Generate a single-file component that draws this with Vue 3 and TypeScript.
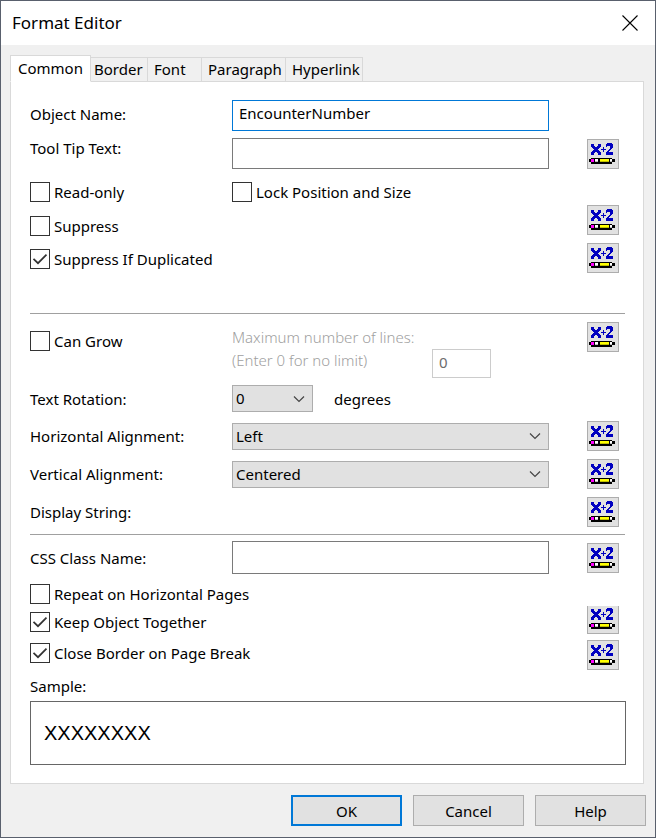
<script setup lang="ts">
import { ref } from 'vue'

const tabs = ['Common', 'Border', 'Font', 'Paragraph', 'Hyperlink']
const activeTab = ref('Common')

const objectName = ref('EncounterNumber')
const toolTip = ref('')
const readOnly = ref(false)
const lockPosition = ref(false)
const suppress = ref(false)
const suppressDuplicated = ref(true)
const canGrow = ref(false)
const maxLines = ref('0')
const rotation = ref('0')
const horizontal = ref('Left')
const vertical = ref('Centered')
const cssClass = ref('')
const repeatPages = ref(false)
const keepTogether = ref(true)
const closeBorder = ref(true)
</script>

<template>
  <main class="dialog">
    <svg class="defs" width="0" height="0" aria-hidden="true">
      <symbol id="formula" viewBox="0 0 26 21" shape-rendering="crispEdges">
        <path fill="#0000c0" d="M2 1h3v2h1v1h2v-1h1v-2h3v3h-1v1h-1v1h-1v1h1v1h1v1h1v3h-3v-2h-1v-1h-2v1h-1v2h-3v-3h1v-1h1v-1h1v-1h-1v-1h-1v-1h-1z" />
        <path fill="#0000c0" d="M14 4h1v2h2v1h-2v2h-1v-2h-2v-1h2z" />
        <path fill="#0000c0" d="M17 1h1v-1h5v1h1v4h-1v1h-1v1h-1v1h-1v1h4v3h-7v-3h1v-1h1v-1h1v-1h1v-3h-3v1h-1z" />
        <path fill="#000" d="M2 15h21v1h3v3h-3v2h-21v-2h-2v-3h2z" />
        <path fill="#ff00ff" d="M2 16h3v3h-3z" />
        <path fill="#fff" d="M6 16h3v3h-3zM21 16h2v3h-2z" />
        <path fill="#c0c0c0" d="M6 18h3v1h-3zM21 18h2v1h-2z" />
        <path fill="#ffff00" d="M11 16h9v3h-9z" />
        <path fill="#c0c000" d="M11 18h9v1h-9z" />
      </symbol>
      <symbol id="tick" viewBox="0 0 20 20">
        <path d="M3.500 9.800 8 14.200 16.500 5.700" fill="none" stroke="#333" stroke-width="1.700" />
      </symbol>
      <symbol id="chevron" viewBox="0 0 12 8">
        <path d="M1 1.500 6 6.500 11 1.500" fill="none" stroke="#444" stroke-width="1.200" />
      </symbol>
    </svg>

    <header class="titlebar">
      <h1>Format Editor</h1>
      <button class="close" type="button" aria-label="Close">
        <svg width="16" height="16" viewBox="0 0 16 16"><path d="M.5.5l15 15M15.500.5l-15 15" stroke="#000" stroke-width="1.100" /></svg>
      </button>
    </header>

    <nav class="tabs" role="tablist">
      <button
        v-for="tab in tabs"
        :key="tab"
        type="button"
        role="tab"
        class="tab"
        :class="[`tab-${tab.toLowerCase()}`, { active: tab === activeTab }]"
        :aria-selected="tab === activeTab"
        @click="activeTab = tab"
      >{{ tab }}</button>
    </nav>

    <section class="panel">
      <div class="row object-row">
        <label for="object-name">Object Name:</label>
        <input id="object-name" v-model="objectName" class="text focused" type="text" />
      </div>

      <div class="row tip-row">
        <label for="tool-tip">Tool Tip Text:</label>
        <input id="tool-tip" v-model="toolTip" class="text" type="text" />
        <button class="formula" type="button" aria-label="Tool tip formula"><svg><use href="#formula" /></svg></button>
      </div>

      <div class="row lock-row">
        <label class="check"><span class="box"><input v-model="readOnly" type="checkbox" /><svg v-if="readOnly"><use href="#tick" /></svg></span>Read-only</label>
        <label class="check"><span class="box"><input v-model="lockPosition" type="checkbox" /><svg v-if="lockPosition"><use href="#tick" /></svg></span>Lock Position and Size</label>
      </div>

      <div class="row suppress-row">
        <label class="check wide"><span class="box"><input v-model="suppress" type="checkbox" /><svg v-if="suppress"><use href="#tick" /></svg></span>Suppress</label>
        <button class="formula" type="button" aria-label="Suppress formula"><svg><use href="#formula" /></svg></button>
      </div>

      <div class="row duplicate-row">
        <label class="check wide"><span class="box"><input v-model="suppressDuplicated" type="checkbox" /><svg v-if="suppressDuplicated"><use href="#tick" /></svg></span>Suppress If Duplicated</label>
        <button class="formula" type="button" aria-label="Duplicate formula"><svg><use href="#formula" /></svg></button>
      </div>

      <hr class="first-rule" />

      <div class="row grow-row">
        <label class="check"><span class="box"><input v-model="canGrow" type="checkbox" /><svg v-if="canGrow"><use href="#tick" /></svg></span>Can Grow</label>
        <div class="limit">
          <label for="max-lines">Maximum number of lines:<br />(Enter 0 for no limit)</label>
          <input id="max-lines" v-model="maxLines" class="text" type="text" :disabled="!canGrow" />
        </div>
        <button class="formula" type="button" aria-label="Can grow formula"><svg><use href="#formula" /></svg></button>
      </div>

      <div class="row rotation-row">
        <label for="rotation">Text Rotation:</label>
        <div class="rotation">
          <span class="select short">
            <select id="rotation" v-model="rotation"><option>0</option><option>90</option><option>270</option></select>
            <svg><use href="#chevron" /></svg>
          </span>
          <span>degrees</span>
        </div>
      </div>

      <div class="row align-row first-align">
        <label for="horizontal">Horizontal Alignment:</label>
        <span class="select">
          <select id="horizontal" v-model="horizontal"><option>Left</option><option>Centered</option><option>Right</option></select>
          <svg><use href="#chevron" /></svg>
        </span>
        <button class="formula" type="button" aria-label="Horizontal alignment formula"><svg><use href="#formula" /></svg></button>
      </div>

      <div class="row align-row">
        <label for="vertical">Vertical Alignment:</label>
        <span class="select">
          <select id="vertical" v-model="vertical"><option>Top</option><option>Centered</option><option>Bottom</option></select>
          <svg><use href="#chevron" /></svg>
        </span>
        <button class="formula" type="button" aria-label="Vertical alignment formula"><svg><use href="#formula" /></svg></button>
      </div>

      <div class="row align-row">
        <span class="wide">Display String:</span>
        <button class="formula" type="button" aria-label="Display string formula"><svg><use href="#formula" /></svg></button>
      </div>

      <hr class="second-rule" />

      <div class="row css-row">
        <label for="css-class">CSS Class Name:</label>
        <input id="css-class" v-model="cssClass" class="text" type="text" />
        <button class="formula" type="button" aria-label="CSS class formula"><svg><use href="#formula" /></svg></button>
      </div>

      <div class="row repeat-row">
        <label class="check wide"><span class="box"><input v-model="repeatPages" type="checkbox" /><svg v-if="repeatPages"><use href="#tick" /></svg></span>Repeat on Horizontal Pages</label>
      </div>

      <div class="row keep-row">
        <label class="check wide"><span class="box"><input v-model="keepTogether" type="checkbox" /><svg v-if="keepTogether"><use href="#tick" /></svg></span>Keep Object Together</label>
        <button class="formula" type="button" aria-label="Keep together formula"><svg><use href="#formula" /></svg></button>
      </div>

      <div class="row border-row">
        <label class="check wide"><span class="box"><input v-model="closeBorder" type="checkbox" /><svg v-if="closeBorder"><use href="#tick" /></svg></span>Close Border on Page Break</label>
        <button class="formula" type="button" aria-label="Close border formula"><svg><use href="#formula" /></svg></button>
      </div>

      <p class="sample-label">Sample:</p>
      <div class="sample">XXXXXXXX</div>
    </section>

    <footer class="actions">
      <button class="primary" type="button">OK</button>
      <button type="button">Cancel</button>
      <button type="button">Help</button>
    </footer>
  </main>
</template>

<style>
body {
  margin: 0;
  background: #f0f0f0;
}
</style>

<style scoped>
* {
  box-sizing: border-box;
}

.dialog {
  min-height: 100vh;
  border: 1px solid #59606d;
  background: #f0f0f0;
  color: #000;
  font: 15px/20px "Noto Sans", "Open Sans", sans-serif;
}

.defs {
  position: absolute;
}

button,
input,
select {
  margin: 0;
  color: inherit;
  font: inherit;
  border-radius: 0;
}

.titlebar {
  display: flex;
  align-items: center;
  justify-content: space-between;
  height: 44px;
  padding: 0 17px 1px 11px;
  background: #fff;
}

h1 {
  margin: 0;
  font-size: 17px;
  font-weight: 400;
}

.close {
  display: flex;
  padding: 0;
  border: 0;
  background: none;
}

.tabs {
  display: flex;
  align-items: flex-end;
  height: 37px;
  margin: 0 9px -1px;
}

.tab {
  height: 25px;
  padding: 0 3px 1px;
  border: 1px solid #d9d9d9;
  border-left: 0;
  background: #f0f0f0;
  text-align: left;
  white-space: nowrap;
}

.tab.active {
  height: 27px;
  padding: 0 7px 2px;
  border-left: 1px solid #d9d9d9;
  border-bottom-color: #fff;
  background: #fff;
}

.tab-common { width: 81px; }
.tab-border { width: 57px; }
.tab-font { width: 54px; padding-left: 6px; }
.tab-paragraph { width: 84px; padding-left: 6px; }
.tab-hyperlink { width: 77px; padding-left: 6px; }

.panel {
  margin: 0 11px 0 9px;
  padding: 18px 17px 18px 19px;
  border: 1px solid #d9d9d9;
  background: #fff;
}

.row {
  display: grid;
  grid-template-columns: 202px 1fr 38px 32px;
  align-items: center;
  padding-right: 7px;
}

.wide {
  grid-column: 1 / 3;
}

.text {
  width: 100%;
  min-width: 0;
  height: 31px;
  padding: 0 6px 5px;
  border: 1px solid #7a7a7a;
  outline: 0;
  background: #fff;
}

.text.focused {
  border-color: #0078d7;
}

.check {
  display: flex;
  align-items: center;
  gap: 4px;
  height: 20px;
  white-space: nowrap;
}

.box {
  display: grid;
  width: 20px;
  height: 20px;
}

.box input,
.box svg {
  grid-area: 1 / 1;
  width: 20px;
  height: 20px;
}

.box input {
  appearance: none;
  border: 1px solid #333;
  background: #fff;
}

.box svg {
  pointer-events: none;
}

.formula {
  display: flex;
  grid-column: 4;
  align-items: flex-start;
  justify-content: flex-start;
  width: 32px;
  height: 30px;
  padding: 3px 0 0 1px;
  border: 1px solid #adadad;
  background: #e1e1e1;
}

.formula svg {
  flex: none;
  width: 26px;
  height: 21px;
}

.object-row label { padding-bottom: 4px; }
.tip-row { margin-top: 7px; }
.tip-row label { align-self: start; }
.lock-row { margin-top: 13px; }
.suppress-row { margin-top: 3px; }
.suppress-row .check { margin-top: 11px; }
.suppress-row .formula { align-self: start; }
.duplicate-row { margin-top: 7px; }
.duplicate-row .check { margin-top: 2px; }

hr {
  height: 1px;
  margin: 0 1px 0 0;
  border: 0;
  background: #a0a0a0;
}

.first-rule { margin-top: 40px; }
.second-rule { margin-top: 7px; }

.grow-row {
  align-items: start;
  margin-top: 8px;
}

.grow-row .check { margin-top: 9px; }

.limit {
  display: flex;
  align-items: flex-end;
  height: 56px;
}

.limit label {
  align-self: flex-start;
  width: 200px;
  padding-top: 4px;
  color: #a0a0a0;
  font-weight: 300;
  line-height: 23px;
  white-space: nowrap;
}

.limit .text {
  width: 59px;
  height: 29px;
  padding-bottom: 3px;
  border-color: #ccc;
  color: #6d6d6d;
}

.rotation-row { margin-top: 7px; }

.rotation {
  display: flex;
  align-items: center;
  gap: 21px;
}

.select {
  display: grid;
  align-items: center;
}

.select.short {
  width: 81px;
}

.select select,
.select svg {
  grid-area: 1 / 1;
}

.select select {
  appearance: none;
  width: 100%;
  height: 27px;
  padding: 0 28px 1px 3px;
  border: 1px solid #adadad;
  background: #e1e1e1;
}

.select svg {
  justify-self: end;
  width: 12px;
  height: 8px;
  margin-right: 8px;
  pointer-events: none;
}

.align-row { margin-top: 8px; }
.align-row.first-align { margin-top: 9px; }

.css-row { margin-top: 6px; }
.css-row .text { height: 33px; }
.repeat-row { margin-top: 10px; }

.keep-row { margin-top: 2px; }
.keep-row .check { margin-top: 4px; }
.keep-row .formula {
  height: 28px;
  padding-top: 2px;
  border-top: 0;
}

.border-row {
  align-items: start;
  margin-top: 6px;
}
.border-row .check { margin-top: 3px; }

.sample-label {
  margin: 6px 0 5px;
}

.sample {
  display: flex;
  align-items: center;
  height: 64px;
  padding: 0 13px;
  border: 1px solid #666;
  font: 20px/24px "Liberation Sans", Arial, sans-serif;
}

.actions {
  display: flex;
  justify-content: flex-end;
  gap: 11px;
  padding: 11px 9px;
}

.actions button {
  width: 111px;
  height: 31px;
  padding: 0;
  border: 1px solid #adadad;
  background: #e1e1e1;
}

.actions .primary {
  border: 2px solid #0078d7;
}
</style>
